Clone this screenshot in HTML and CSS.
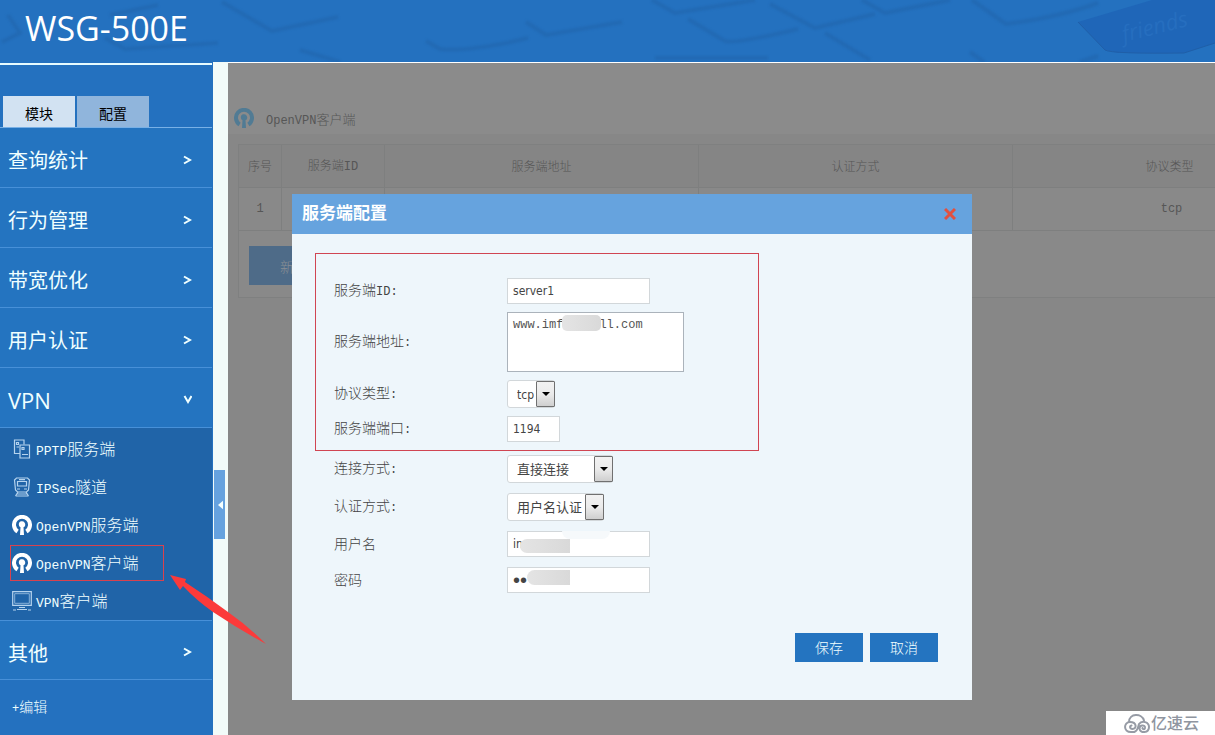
FILE: index.html
```html
<!DOCTYPE html>
<html lang="zh-CN">
<head>
<meta charset="utf-8">
<title>WSG-500E</title>
<link rel="stylesheet" href="styles.css">
</head>
<body>
<svg class="defs" aria-hidden="true">
  <symbol id="openvpn" viewBox="0 0 20 20">
    <path d="M4.500 18.200A10 10 0 1 1 15.500 18.200L13.300 14.800A6 6 0 1 0 6.700 14.800Z" fill="currentColor"/>
    <path d="M6.800 9.500a3.200 3.200 0 1 1 4.700 2.800L12 20H8l.5-7.700A3.200 3.200 0 0 1 6.800 9.500Z" fill="currentColor"/>
  </symbol>
</svg>
<header class="banner">
  <svg class="banner-art" viewBox="0 0 1215 62" preserveAspectRatio="xMinYMin slice" aria-hidden="true">
    <g class="keys" fill="none" stroke="#2165ab" stroke-width="4" stroke-linejoin="round" stroke-opacity=".55">
      <path d="M8 15L20 33 2 42M105 38L125 49 218 43M110 15L158 5"/>
      <path d="M222 2L272 31 338 17M300 50l40 12"/>
      <path d="M426 41L440 49Q470 52 528 38"/>
      <path d="M526 22L546 35 622 22"/>
      <path d="M652 0L675 13 755 0M688 19L725 41Q736 44 798 29M770 4L815 28 875 14"/>
      <path d="M655 58H768M862 0L885 13 950 0M825 33L870 60"/>
      <path d="M972 0L1006 24Q1060 17 1098 3M970 52L984 62M1080 62L1098 56"/>
    </g>
    <path d="M1078 22L1152 0H1215V43L1184 53H1118L1105 50Z" fill="#1f66b8"/>
    <path d="M1078 22L1105 50Q1112 54 1184 53L1215 43" fill="none" stroke="#205fa8"/>
    <text class="banner-word" transform="translate(1124 42) rotate(-14)">friends</text>
  </svg>
  <h1 class="brand">WSG-500E</h1>
</header>

<div class="shell">
  <nav class="sidebar">
    <div class="tabs">
      <button class="tab tab-on" type="button">模块</button>
      <button class="tab" type="button">配置</button>
    </div>
    <a class="menu" href="#">查询统计<svg class="chev" viewBox="0 0 10 10"><path d="M2 1.500L8 5 2 8.500"/></svg></a>
    <a class="menu" href="#">行为管理<svg class="chev" viewBox="0 0 10 10"><path d="M2 1.500L8 5 2 8.500"/></svg></a>
    <a class="menu" href="#">带宽优化<svg class="chev" viewBox="0 0 10 10"><path d="M2 1.500L8 5 2 8.500"/></svg></a>
    <a class="menu" href="#">用户认证<svg class="chev" viewBox="0 0 10 10"><path d="M2 1.500L8 5 2 8.500"/></svg></a>
    <a class="menu menu-latin" href="#">VPN<svg class="chev" viewBox="0 0 10 10"><path d="M2.500 1L6 7 9.500 1"/></svg></a>
    <div class="submenu">
      <a class="sub" href="#"><svg class="sub-icon line" viewBox="0 0 20 20"><path d="M8 14.500H2.500V1H12V5.500"/><path d="M8 6h9.500v13H8z"/><path d="M4.500 3.500h2v2h-2zM10 8.500h2v2h-2zM4.500 8H7M10 15.500h6"/></svg><span><span class="mono">PPTP</span>服务端</span></a>
      <a class="sub" href="#"><svg class="sub-icon line" viewBox="0 0 20 20"><path d="M4.500 1h11L17.500 3l-1 10-2 2h-9l-2-2-1-10z"/><path d="M5.500 4.500h9V9h-9zM7 2.700h6"/><path d="M5 12h3M12 12h3M6 15l-2.500 4M14 15l2.500 4M5 17h10M3.500 19h13"/></svg><span><span class="mono">IPSec</span>隧道</span></a>
      <a class="sub" href="#"><svg class="sub-icon"><use href="#openvpn"/></svg><span><span class="mono">OpenVPN</span>服务端</span></a>
      <a class="sub sub-marked" href="#"><svg class="sub-icon"><use href="#openvpn"/></svg><span><span class="mono">OpenVPN</span>客户端</span></a>
      <a class="sub" href="#"><svg class="sub-icon line" viewBox="0 0 20 20"><path d="M.700 .700h18.600v13.600H.700z"/><path d="M2.700 2.700h14.600v9.600H2.700z" stroke-width=".7"/><path d="M7 16.500h6M1 19h3M5 18.500h10M16 19h3"/></svg><span><span class="mono">VPN</span>客户端</span></a>
    </div>
    <a class="menu menu-top" href="#">其他<svg class="chev" viewBox="0 0 10 10"><path d="M2 1.500L8 5 2 8.500"/></svg></a>
    <a class="edit" href="#"><span class="mono">+</span>编辑</a>
  </nav>

  <div class="rail">
    <button class="rail-toggle" type="button" aria-label="收起"><svg viewBox="0 0 6 10"><path d="M6 0v10L0 5z" fill="#f5ffff"/></svg></button>
  </div>

  <main class="content">
    <div class="page-title">
      <svg class="title-icon"><use href="#openvpn"/></svg>
      <h2><span class="mono">OpenVPN</span>客户端</h2>
    </div>
    <div class="panel">
      <table class="grid">
        <colgroup><col class="c-no"><col class="c-id"><col class="c-wide"><col class="c-wide"><col class="c-wide"></colgroup>
        <thead><tr><th>序号</th><th>服务端<span class="mono">ID</span></th><th>服务端地址</th><th>认证方式</th><th>协议类型</th></tr></thead>
        <tbody><tr><td>1</td><td></td><td></td><td></td><td class="proto">tcp</td></tr></tbody>
      </table>
      <button class="add" type="button">新增</button>
    </div>

    <section class="dialog" role="dialog" aria-labelledby="dlg-title">
      <div class="dialog-head">
        <h3 id="dlg-title">服务端配置</h3>
        <button class="close" type="button" aria-label="关闭"><svg viewBox="0 0 12 12"><path d="M1 1l10 10M11 1L1 11" stroke="#e2503f" stroke-width="3"/></svg></button>
      </div>
      <form class="form">
        <div class="group group-tight">
          <div class="row"><label for="sid">服务端<span class="mono">ID:</span></label><input id="sid" class="field" value="server1"></div>
          <div class="row"><label for="addr">服务端地址<span class="mono">:</span></label><div class="cover"><textarea id="addr" class="area">www.imf     ll.com</textarea><i class="smudge smudge-addr"></i></div></div>
          <div class="row"><label for="proto">协议类型<span class="mono">:</span></label><div class="drop drop-s"><select id="proto"><option>tcp</option></select></div></div>
          <div class="row"><label for="port">服务端端口<span class="mono">:</span></label><input id="port" class="field field-s" value="1194"></div>
        </div>
        <div class="group">
          <div class="row"><label for="conn">连接方式<span class="mono">:</span></label><div class="drop drop-l"><select id="conn"><option>直接连接</option></select></div></div>
          <div class="row"><label for="auth">认证方式<span class="mono">:</span></label><div class="drop drop-m"><select id="auth"><option>用户名认证</option></select></div></div>
          <div class="row"><label for="user">用户名</label><div class="cover"><input id="user" class="field" value="in"><i class="smudge smudge-user"></i><i class="wipe wipe-user"></i></div></div>
          <div class="row"><label for="pass">密码</label><div class="cover"><input id="pass" class="field field-pass" type="password" value="xx"><i class="smudge smudge-pass"></i></div></div>
        </div>
        <div class="actions">
          <button class="btn" type="button">保存</button>
          <button class="btn" type="button">取消</button>
        </div>
      </form>
      <div class="marker"></div>
    </section>
  </main>
</div>

<svg class="arrow" viewBox="0 0 100 74" aria-hidden="true"><path d="M2 3L18 7 17 10Q40 25 60 40 80 54 98 72 72 58 45 40 28 28 15 14L12 18Z" fill="#fb3a3a"/></svg>
<div class="watermark">
  <svg viewBox="0 0 26 20" aria-hidden="true"><g fill="none" stroke="#969ba5" stroke-width="2" stroke-linecap="round"><path d="M5 8C5-1 18-1 20 6.500"/><path d="M10 18H7C-1 18-.500 8 6 8c7 0 7 7 2.500 7-3 0-3-3-1-3.500"/><path d="M10 18C14 17 14 13 15 10 18 6 25 8 25 13c0 6-9 7-9.500 1.500 0-4 6-4 5.500-.500-.500 2-3 1-2.500 0"/></g></svg>
  <span>亿速云</span>
</div>
</body>
</html>
```
FILE: styles.css
```css
* { box-sizing: border-box; }
body {
  margin: 0;
  min-height: 100vh;
  display: flex;
  flex-direction: column;
  position: relative;
  overflow: hidden;
  background: #2471bf;
  font-family: "Liberation Sans", "Noto Sans CJK SC", sans-serif;
  font-weight: 300;
}
button, input, textarea, select { font: inherit; margin: 0; border-radius: 0; }
a { color: inherit; text-decoration: none; }
h1, h2, h3 { margin: 0; font-weight: inherit; }
.defs { position: absolute; width: 0; height: 0; }
.mono { font-family: "Liberation Mono", monospace; font-size: 12px; font-weight: 400; }

.banner { position: relative; height: 62px; background: #2471bf; }
.banner-art { position: absolute; inset: 0; width: 100%; height: 100%; }
.keys { filter: blur(1px); }
.banner-word { font: italic 22px "Open Sans", sans-serif; fill: #266ebf; }
.brand {
  position: relative;
  padding: 6px 0 0 25px;
  color: #fff;
  font: 400 34px/44px "Open Sans", sans-serif;
}

.shell { flex: 1; display: flex; }
.sidebar {
  flex: 0 0 212px;
  border-top: 2px solid #e6fbff;
  margin-top: 1px;
  color: #f0ffff;
}
.tabs {
  display: flex;
  gap: 2px;
  padding: 31px 0 0 3px;
  border-bottom: 1px solid #78b0e6;
}
.tab {
  width: 72px;
  height: 31px;
  padding: 2px 0 0;
  border: 0;
  background: #90b5dc;
  color: #000;
  font-size: 14px;
  font-weight: 400;
}
.tab-on { background: #d2e2f2; }
.menu {
  display: flex;
  align-items: center;
  justify-content: space-between;
  height: 60px;
  padding: 4px 20px 0 8px;
  border-bottom: 1px solid #4790d8;
  background: #2474c0;
  font-size: 20px;
  font-weight: 400;
}
.menu-latin { font: 400 22px "Open Sans", sans-serif; }
.menu-top { border-top: 1px solid #4790d8; }
.chev { width: 10px; height: 10px; fill: none; stroke: #f0ffff; stroke-width: 2; }
.submenu { padding: 2px 0 0; background: #2064a8; }
.sub {
  display: flex;
  align-items: center;
  gap: 4px;
  height: 38px;
  padding-left: 12px;
  font-size: 16px;
  line-height: 20px;
}
.sub > span { padding-top: 3px; }
.sub .mono { font-size: 13px; }
.sub-marked {
  width: 154px;
  height: 36px;
  margin: 1px 0 1px 10px;
  padding-left: 1px;
  border: 1px solid #d8424e;
}
.sub-icon { width: 20px; height: 20px; color: #fff; }
.line { fill: none; stroke: #b5d3ee; stroke-width: 1.2; }
.edit { display: block; padding: 16px 12px; font-size: 14px; line-height: 22px; }

.rail {
  flex: 0 0 16px;
  padding: 408px 0 0 1px;
  border-left: 1px solid #2471bf;
  background: #f2fbf9;
}
.rail-toggle {
  display: flex;
  align-items: center;
  justify-content: flex-end;
  width: 11px;
  height: 69px;
  padding: 0 2px;
  border: 0;
  background: #66a2df;
}
.rail-toggle svg { width: 5px; height: 10px; }

.content {
  flex: 1;
  min-width: 0;
  position: relative;
  overflow: hidden;
  border-top: 1px solid #fff;
  background: #878787;
  color: #565656;
}
.page-title {
  display: flex;
  align-items: center;
  gap: 12px;
  height: 71px;
  padding: 39px 0 0 6px;
  background: #8b8b8b;
}
.page-title h2 { font-size: 13px; line-height: 20px; padding-top: 4px; }
.title-icon { width: 20px; height: 20px; color: #517b94; }
.panel {
  width: max-content;
  margin: 10px;
  padding-bottom: 12px;
  border: 1px solid #7f8080;
  background: #898989;
}
.grid { table-layout: fixed; width: 1088px; border-collapse: separate; border-spacing: 0; font-size: 12px; }
.grid th, .grid td {
  height: 43px;
  padding: 0;
  border: 1px solid #7e7f7f;
  border-top: 0;
  border-left: 0;
  font-weight: inherit;
  text-align: center;
}
.grid th { background: #858585; padding-bottom: 2px; }
.grid td { font-family: "Liberation Mono", monospace; font-weight: 400; }
.grid .proto { padding-left: 4px; }
.c-no { width: 43px; }
.c-id { width: 103px; }
.c-wide { width: 314px; }
.add {
  display: block;
  width: 90px;
  height: 39px;
  margin: 15px 0 0 10px;
  border: 0;
  background: #4e6b88;
  color: #8a8f94;
  font-size: 14px;
}

.dialog {
  position: absolute;
  top: 131px;
  left: 64px;
  width: 680px;
  background: #eef6fb;
  color: #444;
}
.dialog-head {
  display: flex;
  align-items: center;
  justify-content: space-between;
  height: 40px;
  padding: 0 16px 0 10px;
  background: #66a3de;
  color: #fff;
}
.dialog-head h3 { font-size: 17px; font-weight: 700; line-height: 24px; }
.close { display: flex; padding: 0; border: 0; background: none; }
.close svg { width: 12px; height: 12px; }
.form { padding: 44px 34px 38px 42px; }
.group { display: flex; flex-direction: column; gap: 10px; }
.group-tight { gap: 8px; margin-bottom: 13px; }
.row { display: grid; grid-template-columns: 173px auto; align-items: center; justify-content: start; font-size: 14px; line-height: 20px; }
.cover { position: relative; display: flex; }
.field {
  width: 143px;
  height: 26px;
  padding: 1px 5px;
  border: 1px solid #d2d7da;
  background: #fff;
  color: #444;
  font: 12px "DejaVu Sans Condensed", "DejaVu Sans", sans-serif;
}
.field-s { width: 53px; }
.field-pass { font: 20px "Liberation Sans", sans-serif; }
.area {
  width: 177px;
  height: 60px;
  padding: 4px 5px;
  border: 1px solid #abb3bb;
  background: #fff;
  color: #555;
  font: 12px/16px "Liberation Mono", monospace;
  resize: none;
  overflow: hidden;
}
.drop { position: relative; height: 28px; }
.drop-s { width: 48px; }
.drop-m { width: 97px; }
.drop-l { width: 106px; }
.drop select {
  appearance: none;
  display: block;
  width: 100%;
  height: 28px;
  padding: 1px 18px 0 9px;
  border: 1px solid #d2d7da;
  border-radius: 3px;
  background: #fff;
  color: #444;
  font: 400 13px "DejaVu Sans Condensed", "Noto Sans CJK SC", sans-serif;
}
.drop-s select { font-size: 12px; }
.drop::before {
  content: "";
  position: absolute;
  inset: 1px 0 1px auto;
  width: 17px;
  border: 1px solid #707070;
  border-radius: 1px;
  background: linear-gradient(#f2f2f2, #ebebeb 50%, #cfcfcf);
  pointer-events: none;
}
.drop::after {
  content: "";
  position: absolute;
  top: 12px;
  right: 5px;
  border: 4px solid transparent;
  border-top-color: #000;
  border-bottom: 0;
  pointer-events: none;
}
.smudge { position: absolute; background: linear-gradient(90deg, #e4e4e4, #d9d9d9); }
.smudge-addr { left: 55px; top: 3px; width: 39px; height: 16px; border-radius: 5px; }
.smudge-user { left: 13px; top: 8px; width: 50px; height: 14px; border-radius: 8px 0 0 8px; }
.smudge-pass { left: 20px; top: 3px; width: 43px; height: 15px; border-radius: 8px 0 0 8px; }
.wipe { position: absolute; background: #f6f9fb; }
.wipe-user { left: 55px; top: 0; width: 48px; height: 8px; border-radius: 0 0 8px 8px; }
.actions { display: flex; justify-content: flex-end; gap: 7px; padding-top: 40px; }
.btn { width: 68px; height: 29px; padding: 0 0 2px; border: 0; background: #2474c0; color: #f0ffff; font-size: 14px; }
.marker {
  position: absolute;
  top: 59px;
  left: 23px;
  width: 444px;
  height: 198px;
  border: 1px solid #d04552;
  pointer-events: none;
}

.arrow { position: absolute; left: 168px; top: 572px; width: 100px; height: 74px; pointer-events: none; }
.watermark {
  position: absolute;
  right: 0;
  bottom: 0;
  display: flex;
  align-items: center;
  gap: 1px;
  width: 109px;
  height: 25px;
  padding-left: 18px;
  background: #fff;
  color: #8f95a0;
  font-size: 16px;
  font-weight: 500;
  line-height: 24px;
}
.watermark svg { width: 26px; height: 20px; }
```
